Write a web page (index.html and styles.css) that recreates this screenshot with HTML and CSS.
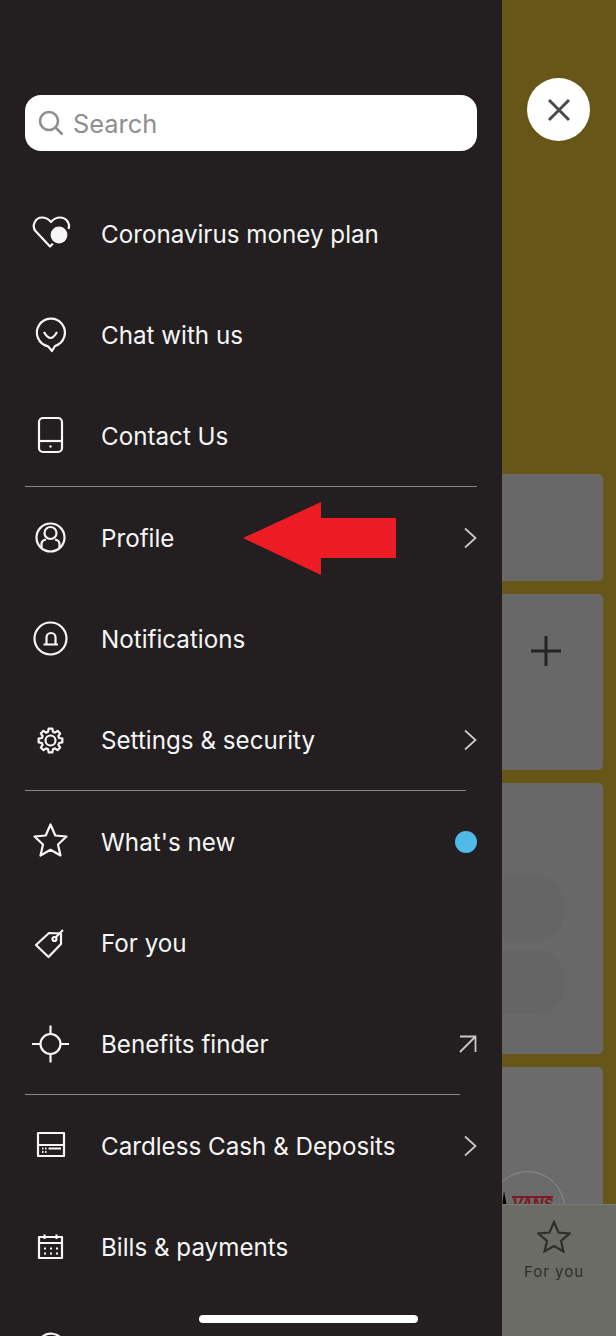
FILE: index.html
```html
<!DOCTYPE html>
<html lang="en">
<head>
  <meta charset="UTF-8">
  <title>Menu</title>
  <link rel="stylesheet" href="styles.css">
</head>
<body>
  <div class="screen">
    <nav class="drawer">
      <div class="search">
        <svg class="search-icon" width="26" height="26" viewBox="0 0 26 26"><circle cx="11" cy="11" r="9"/><path d="M17.5 17.5L24.5 24.5"/></svg>
        <span>Search</span>
      </div>

      <a class="row">
        <svg class="icon" viewBox="0 0 44 44"><path d="M24 31.5L21 34.5L6.5 19C2.5 14 6 5.5 13 5.5C16.5 5.5 19.5 7 22 10C24.5 7 27.5 5.5 31 5.5C37 5.5 41.5 11 39.5 17"/><circle class="solid" cx="30" cy="23" r="9.5"/></svg>
        <span>Coronavirus money plan</span>
      </a>
      <a class="row">
        <svg class="icon" viewBox="0 0 44 44"><path d="M19 33.3A14 14 0 1 1 26 33L23 38Z"/><path d="M15 19Q21.5 31 28 19"/></svg>
        <span>Chat with us</span>
      </a>
      <a class="row">
        <svg class="icon" viewBox="0 0 44 44"><rect x="10" y="4" width="23" height="34" rx="4"/><path d="M10 27H33"/><circle class="dot-mark" cx="21.5" cy="32.5" r="1.2"/></svg>
        <span>Contact Us</span>
      </a>
      <hr class="line">

      <a class="row">
        <svg class="icon" viewBox="0 0 44 44"><circle cx="21.5" cy="21.5" r="14"/><circle cx="21.5" cy="17" r="6"/><path d="M12.5 32V28C12.5 25.5 14.5 24 17 23.5M30.5 32V28C30.5 25.5 28.5 24 26 23.5"/></svg>
        <span>Profile</span>
        <svg class="chevron" width="14" height="22" viewBox="0 0 14 22"><path d="M2 1.5L12.5 11L2 20.5"/></svg>
      </a>
      <a class="row">
        <svg class="icon" viewBox="0 0 44 44"><circle cx="21.5" cy="21.5" r="16"/><path d="M17.5 27V20.5A4.5 4.5 0 0 1 26.5 20.5V27M14.5 27.5H29"/></svg>
        <span>Notifications</span>
      </a>
      <a class="row">
        <svg class="icon" viewBox="0 0 44 44"><polygon transform="translate(21.5 22.5)" points="8.65,-2.48 11.85,-1.88 11.85,1.88 8.65,2.48 7.87,4.36 9.71,7.05 7.05,9.71 4.36,7.87 2.48,8.65 1.88,11.85 -1.88,11.85 -2.48,8.65 -4.36,7.87 -7.05,9.71 -9.71,7.05 -7.87,4.36 -8.65,2.48 -11.85,1.88 -11.85,-1.88 -8.65,-2.48 -7.87,-4.36 -9.71,-7.05 -7.05,-9.71 -4.36,-7.87 -2.48,-8.65 -1.88,-11.85 1.88,-11.85 2.48,-8.65 4.36,-7.87 7.05,-9.71 9.71,-7.05 7.87,-4.36"/><circle cx="21.5" cy="22.5" r="5"/></svg>
        <span>Settings &amp; security</span>
        <svg class="chevron" width="14" height="22" viewBox="0 0 14 22"><path d="M2 1.5L12.5 11L2 20.5"/></svg>
      </a>
      <hr class="line line-mid">

      <a class="row">
        <svg class="icon" viewBox="0 0 44 44"><polygon points="21.5,4.5 26.3,15.5 37.5,16.5 29,24.5 31.5,35.5 21.5,29.8 11.5,35.5 14,24.5 5.5,16.5 16.7,15.5"/></svg>
        <span>What's new</span>
        <i class="dot"></i>
      </a>
      <a class="row">
        <svg class="icon" viewBox="0 0 44 44"><path d="M7 24L19.5 36L32 23V12.5L20 12Z"/><circle cx="25.5" cy="18" r="2"/><path d="M27 16L34 9"/></svg>
        <span>For you</span>
      </a>
      <a class="row">
        <svg class="icon" viewBox="0 0 44 44"><circle cx="21.5" cy="22" r="10"/><path d="M21.5 3.5V12M21.5 32V40.5M3 22H11.5M31.5 22H40"/></svg>
        <span>Benefits finder</span>
        <svg class="chevron" width="18" height="18" viewBox="0 0 18 18"><path d="M1 1.5H16.5V17M16.5 1.5L1 17"/></svg>
      </a>
      <hr class="line line-short">

      <a class="row">
        <svg class="icon" viewBox="0 0 44 44"><rect x="9" y="9" width="26" height="23"/><path d="M9 21H35M19.5 24.5H32"/><path class="thin" d="M13 24.5H14.5M16 24.5H17.5M13 28H14.5M16 28H17.5"/></svg>
        <span>Cardless Cash &amp; Deposits</span>
        <svg class="chevron" width="14" height="22" viewBox="0 0 14 22"><path d="M2 1.5L12.5 11L2 20.5"/></svg>
      </a>
      <a class="row">
        <svg class="icon" viewBox="0 0 44 44"><rect x="10" y="12" width="23" height="21"/><path d="M10 18H33M15.5 9.5V14M27.5 9.5V14"/><path class="thin" d="M15 23.5H17M21 23.5H23M27 23.5H29M15 28.5H17M21 28.5H23M27 28.5H29"/></svg>
        <span>Bills &amp; payments</span>
      </a>
      <a class="row">
        <svg class="icon" viewBox="0 0 44 44"><path d="M13 11A14 14 0 0 1 33 13"/></svg>
      </a>
    </nav>

    <main class="page">
      <button class="close">
        <svg width="26" height="26" viewBox="0 0 26 26"><path d="M3 3L23 23M23 3L3 23"/></svg>
      </button>
      <div class="cards">
        <div class="card card-a"></div>
        <div class="card card-b">
          <svg width="32" height="32" viewBox="0 0 32 32"><path d="M16 1V31M1 16H31"/></svg>
        </div>
        <div class="card card-c">
          <div class="ghost"></div>
          <div class="ghost"></div>
        </div>
        <div class="card card-d">
          <div class="logo"><i class="logo-mark"></i><b>VANS</b></div>
        </div>
      </div>
      <div class="tabbar">
        <svg width="34" height="33" viewBox="0 0 34 33"><polygon points="17,2 21.5,12.5 32.5,13.5 24,21 26.5,31.5 17,26 7.5,31.5 10,21 1.5,13.5 12.5,12.5"/></svg>
        <span>For you</span>
      </div>
    </main>

    <svg class="arrow" width="153" height="73" viewBox="0 0 153 73"><polygon points="0,36 78,0 78,16 153,16 153,56 78,56 78,73"/></svg>
    <div class="home-bar"></div>
  </div>
</body>
</html>
```

FILE: styles.css
```css
* {
  box-sizing: border-box;
}
body {
  margin: 0;
  font-family: Inter, "Liberation Sans", sans-serif;
}
.screen {
  position: relative;
  display: flex;
  width: 616px;
  height: 1336px;
  overflow: hidden;
  background: #665618;
}

/* drawer */
.drawer {
  flex: 0 0 502px;
  height: 1336px;
  padding: 95px 25px 0;
  overflow: hidden;
  background: #231f20;
  color: #f6f6f6;
}
.search {
  display: flex;
  align-items: center;
  gap: 9px;
  height: 56px;
  margin-bottom: 32px;
  padding-left: 13px;
  background: #fff;
  border-radius: 16px;
  color: #8e8e8e;
  font-size: 25.4px;
}
.search-icon {
  fill: none;
  stroke: #8e8e8e;
  stroke-width: 2.6;
}
.row {
  display: flex;
  align-items: center;
  gap: 28px;
  height: 101px;
  font-size: 24.2px;
}
.row span {
  padding-top: 2px;
}
.icon {
  flex: 0 0 44px;
  width: 44px;
  height: 44px;
  margin-left: 4px;
  fill: none;
  stroke: #f6f6f6;
  stroke-width: 2.2;
  stroke-linejoin: round;
}
.icon .solid {
  fill: #f6f6f6;
  stroke: #231f20;
}
.icon .dot-mark {
  fill: #f6f6f6;
  stroke: none;
}
.icon .thin {
  stroke-width: 1.8;
}
.chevron {
  margin-left: auto;
  fill: none;
  stroke: #c9c7c7;
  stroke-width: 1.8;
}
.dot {
  width: 22px;
  height: 22px;
  margin-left: auto;
  background: #4fb9e8;
  border-radius: 50%;
}
.line {
  height: 1px;
  margin: 0;
  border: 0;
  background: #8a8788;
}
.line-mid {
  width: 441px;
}
.line-short {
  width: 435px;
}

/* page behind the drawer */
.page {
  flex: 1;
  display: flex;
  flex-direction: column;
}
.close {
  position: absolute;
  top: 78px;
  left: 527px;
  display: flex;
  align-items: center;
  justify-content: center;
  width: 63px;
  height: 63px;
  padding: 0;
  border: 0;
  border-radius: 50%;
  background: #fff;
}
.close svg {
  fill: none;
  stroke: #4a4a4a;
  stroke-width: 3;
}
.cards {
  flex: 1;
  display: flex;
  flex-direction: column;
  gap: 13px;
  min-height: 0;
  padding: 474px 13px 0 0;
  overflow: hidden;
}
.card {
  flex: none;
  background: #686868;
  border-radius: 0 5px 5px 0;
}
.card-a {
  height: 107px;
}
.card-b {
  display: flex;
  align-items: center;
  height: 176px;
  padding: 0 0 63px 28px;
}
.card-b svg {
  fill: none;
  stroke: #232323;
  stroke-width: 3;
}
.card-c {
  display: flex;
  flex-direction: column;
  gap: 10px;
  height: 271px;
  padding-top: 93px;
}
.ghost {
  width: 62px;
  height: 64px;
  background: #656565;
  border-radius: 0 28px 28px 0;
}
.card-d {
  height: 200px;
  padding-top: 104px;
  background: #6b6b6b;
}
.logo {
  display: flex;
  align-items: flex-start;
  gap: 5px;
  width: 75px;
  height: 75px;
  margin-left: -12px;
  padding: 19px 0 0 11px;
  border: 1px solid #8b8b8b;
  border-radius: 50%;
  color: #7c1c22;
  font-size: 14.5px;
  font-style: italic;
  line-height: 0.8;
}
.logo-mark {
  flex: none;
  width: 5px;
  height: 16px;
  background: #000;
  clip-path: polygon(40% 0, 100% 100%, 0 100%);
}
.logo b {
  margin-top: 5px;
  border-top: 2px solid #7c1c22;
}
.tabbar {
  position: relative;
  flex: 0 0 132px;
  display: flex;
  flex-direction: column;
  align-items: center;
  padding: 15px 10px 0 0;
  background: #6c6c67;
  border-top: 1px solid #7b7b76;
  color: #2e2e2c;
  font-size: 15px;
  letter-spacing: 1px;
}
.tabbar svg {
  margin-bottom: 9px;
  fill: none;
  stroke: #2e2e2c;
  stroke-width: 2.2;
}

/* overlays */
.arrow {
  position: absolute;
  top: 502px;
  left: 243px;
  fill: #ed1c24;
}
.home-bar {
  position: absolute;
  top: 1315px;
  left: 199px;
  width: 219px;
  height: 8px;
  background: #fff;
  border-radius: 4px;
}
```
